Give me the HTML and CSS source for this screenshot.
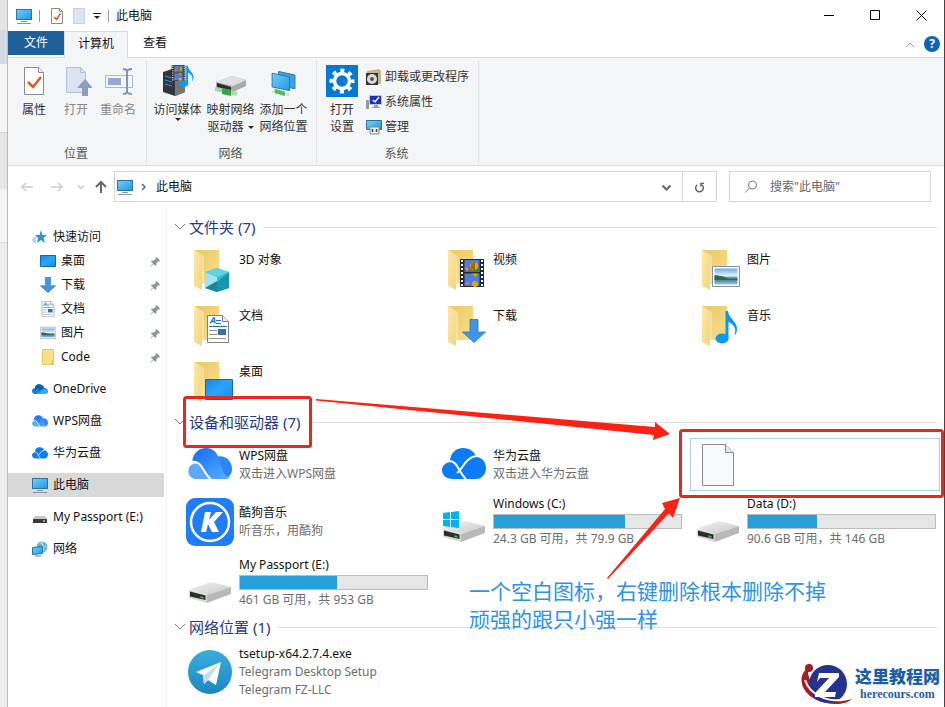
FILE: index.html
```html
<!DOCTYPE html>
<html lang="zh-CN">

<head>
    <meta charset="UTF-8">
    <meta name="viewport" content="width=device-width, initial-scale=1.0">
    <title>此电脑</title>
    <link rel="stylesheet" href="styles.css">
</head>

<body>
    <!-- shared icons -->
    <svg class="sprite" aria-hidden="true">
        <defs>
            <linearGradient id="screen" x1="0" y1="0" x2="1" y2="1">
                <stop offset="0" stop-color="#6fd0fb" />
                <stop offset="1" stop-color="#1f97e6" />
            </linearGradient>
            <linearGradient id="desk" x1="0" y1="0" x2="1" y2="1">
                <stop offset="0" stop-color="#1488e4" />
                <stop offset=".5" stop-color="#2aa6ff" />
                <stop offset="1" stop-color="#1488e8" />
            </linearGradient>
            <linearGradient id="fold-back" x1="0" y1="0" x2="1" y2="1">
                <stop offset="0" stop-color="#e9c765" />
                <stop offset="1" stop-color="#fbdf8c" />
            </linearGradient>
            <linearGradient id="fold-front" x1="0" y1="0" x2="1" y2="1">
                <stop offset="0" stop-color="#ffe9a8" />
                <stop offset="1" stop-color="#f3d57c" />
            </linearGradient>
            <linearGradient id="metal" x1="0" y1="0" x2="1" y2="1">
                <stop offset="0" stop-color="#f2f2f2" />
                <stop offset="1" stop-color="#c9c9c9" />
            </linearGradient>
            <linearGradient id="cloud" x1="0" y1="0" x2="1" y2="1">
                <stop offset="0" stop-color="#1469f0" />
                <stop offset="1" stop-color="#55b4ff" />
            </linearGradient>
            <linearGradient id="sky" x1="0" y1="0" x2="0" y2="1">
                <stop offset="0" stop-color="#6ea9ea" />
                <stop offset=".45" stop-color="#e4f2fc" />
                <stop offset=".6" stop-color="#4c8a72" />
                <stop offset=".7" stop-color="#477f9c" />
                <stop offset="1" stop-color="#9cc9e4" />
            </linearGradient>
            <linearGradient id="tele" x1="0" y1="0" x2="0" y2="1">
                <stop offset="0" stop-color="#37aee2" />
                <stop offset="1" stop-color="#1e86c0" />
            </linearGradient>
        </defs>
        <symbol id="i-pc" viewBox="0 0 16 16">
            <rect x=".5" y="1.5" width="15" height="10" fill="url(#screen)" stroke="#2d759f" />
            <path d="M5 13.500h6M1 15.500h14" stroke="#8296a3" />
        </symbol>
        <symbol id="i-check" viewBox="0 0 32 32">
            <path d="M6.500 2.500h14l5 5v22h-19z" fill="#fff" stroke="#8a8a8a" />
            <path d="M20.500 2.500v5h5" fill="#eee" stroke="#8a8a8a" />
            <path d="M10 17l5 5 8-10" fill="none" stroke="#e2571e" stroke-width="2.500" />
        </symbol>
        <symbol id="i-pin" viewBox="0 0 12 12">
            <path d="M7 1l4 4-1 1-1-.3L7 8v2L6 11 3.800 8.600 1 11.500l-.5-.5L3.300 8.100 1 6l1-1h2l2.400-2L6 2z" fill="#8796a5" />
        </symbol>
        <symbol id="i-folder" viewBox="0 0 48 48">
            <path d="M8 4h25v34H14z" fill="url(#fold-back)" />
            <path d="M8 4l8 5v35l-8-4z" fill="url(#fold-front)" />
            <path d="M16 9v35l2-4V10z" fill="#fff" opacity=".35" />
        </symbol>
        <symbol id="i-drive" viewBox="0 0 48 48">
            <path d="M3 30.500L25 23l20 5-24 8z" fill="url(#metal)" />
            <path d="M3 31l18 5v8L3 39z" fill="#d8d8d8" />
            <path d="M4 32.500l15.500 4V41L4 37.500z" fill="#2b302c" />
            <path d="M21 36l24-8v7l-24 9z" fill="#b9b9b9" />
            <path d="M14.500 37.300l3 .8v1.600l-3-.8z" fill="#3fc450" />
        </symbol>
        <symbol id="i-wps" viewBox="0 0 44 32">
            <path d="M28 9c8-3 16 3 16 12 0 6-4 10-10 10l-9-8z" fill="#2f85f6" />
            <path d="M4 14C5 5 11 0 18 0c7 0 11 4 13 11 2 7 3 16 11 19-2 1-4 1-6 1H23C18 26 14 14 4 14z" fill="url(#cloud)" />
            <path d="M1 20c3-6 10-6 14 0 3 5 4 9 7 11H9C2 31-1 25 1 20z" fill="#5aa9fa" />
            <path d="M4 13.500C15 13 15 26 23 31" fill="none" stroke="#fff" stroke-width="2" />
        </symbol>
        <symbol id="i-huawei" viewBox="0 0 44 32">
            <path d="M8 14C8 5 14 0 21 0c7 0 12 4 13 9 6 0 10 5 10 11 0 6-4 11-10 11H11C4 31 0 27 0 22c0-4 3-7 8-8z" fill="#0a7cf8" />
            <path d="M7 13c9 0 9 11 17 18M34 8C23 10 21 21 15 25" fill="none" stroke="#fff" stroke-width="2" />
        </symbol>
        <symbol id="i-down" viewBox="0 0 24 24">
            <path d="M8 .5h8V13h7.500L12 23.500.5 13H8z" fill="#3e96e4" stroke="#2874bb" stroke-width=".8" />
        </symbol>
        <symbol id="i-doc" viewBox="0 0 22 28">
            <path d="M.5.5h15l6 6v21H.5z" fill="#fff" stroke="#7d8185" />
            <path d="M15.500.5v6h6" fill="#e8eaec" stroke="#7d8185" />
            <path d="M3 8.500L6.500 3h1L8 8.500M4.500 6.500H8" fill="none" stroke="#1979ca" stroke-width="1.300" />
            <path d="M9 5.500h5M9 8.500h5M2 11.500h18" stroke="#1979ca" />
            <path d="M2 15.500h8M2 19.500h8M2 23.500h17" stroke="#9a8f9a" />
            <path d="M11 14h8v6h-8z" fill="#35729e" />
        </symbol>
        <symbol id="i-photo" viewBox="0 0 28 21">
            <path d="M.5.5h27v20H.5z" fill="#fff" stroke="#84909b" />
            <path d="M2.500 2.500h23v16h-23z" fill="url(#sky)" />
            <path d="M2.500 9l7 1 8 3h8v1H2.500z" fill="#35664a" />
        </symbol>
        <symbol id="i-note" viewBox="0 0 22 34">
            <ellipse cx="7" cy="28.500" rx="6.500" ry="5" fill="#0a99ee" />
            <path d="M10.500 29V1H13c1 8 9 10 9 18 0 3-1 5-2 6-1-1 1-3 0-6-1-4-4-6-6.500-7v17z" fill="#0a99ee" />
        </symbol>
        <symbol id="i-film" viewBox="0 0 24 28">
            <path d="M0 0h24v28H0z" fill="#292929" />
            <path d="M4.500 1h15v12h-15zM4.500 14.500h15V27h-15z" fill="#477fe0" />
            <path d="M4.500 9c5-3 8 0 15-1v5h-15z" fill="#47852f" />
            <circle cx="14" cy="7" r="4" fill="#e7a616" />
            <path d="M14 3v8M12 4v6" stroke="#7c1717" />
            <path d="M12 14.500h6l-3 4z" fill="#d5a00f" />
            <circle cx="15" cy="25" r="3" fill="#e7a616" />
            <path d="M5 9l3 1-2 2M5 25l4-1" stroke="#ef6aa6" stroke-width="2" />
            <path d="M2 1v27M22 1v27" stroke="#fff" stroke-width="2" stroke-dasharray="2 2" />
        </symbol>
        <symbol id="i-net" viewBox="-2 -4 32 35">
            <path d="M8 3l18 4v15L8 18z" fill="#3aa2e4" stroke="#27729f" />
            <path d="M1 5l19 4v15L1 20z" fill="url(#screen)" stroke="#27729f" />
            <path d="M1 23l19 4v3L1 26z" fill="#d5dbd8" />
            <path d="M4 22l11 3v5L4 27z" fill="#52bd63" />
        </symbol>
    </svg>

    <div class="backdrop"></div>
    <div class="window">
        <header class="titlebar">
            <svg class="i16"><use href="#i-pc" /></svg>
            <span class="sep"></span>
            <svg class="i16" viewBox="0 0 16 16">
                <path d="M2.500.5h8l3 3v12h-11z" fill="#fff" stroke="#8a8a8a" />
                <path d="M10.500.5v3h3" fill="none" stroke="#8a8a8a" />
                <path d="M5 9l2.500 2.500 4-6" fill="none" stroke="#e2571e" stroke-width="1.500" />
            </svg>
            <svg class="i16" viewBox="0 0 16 16"><path d="M1.500.5h11v15h-11z" fill="#dbe4f5" stroke="#c3d0e8" /></svg>
            <svg class="quick-more" viewBox="0 0 8 8"><path d="M0 1.500h8" stroke="#222" /><path d="M1 4h6L4 7z" fill="#222" /></svg>
            <span class="sep"></span>
            <span class="title">此电脑</span>
            <div class="window-buttons">
                <button aria-label="最小化"><svg viewBox="0 0 11 11"><path d="M0 5.500h10" stroke="#000" /></svg></button>
                <button aria-label="最大化"><svg viewBox="0 0 11 11"><path d="M.5.5h9v9h-9z" fill="none" stroke="#000" /></svg></button>
                <button aria-label="关闭"><svg viewBox="0 0 11 11"><path d="M.5.5l10 10M10.500.5l-10 10" stroke="#000" /></svg></button>
            </div>
        </header>

        <div class="tabs">
            <button class="tab file">文件</button>
            <button class="tab active">计算机</button>
            <button class="tab">查看</button>
            <button class="collapse" aria-label="折叠功能区"><svg viewBox="0 0 10 6"><path d="M1 5l4-4 4 4" fill="none" stroke="#999" /></svg></button>
            <button class="help" aria-label="帮助">?</button>
        </div>

        <div class="ribbon">
            <section class="group">
                <div class="group-items">
                    <button class="big"><svg class="i32"><use href="#i-check" /></svg>属性</button>
                    <button class="big" disabled>
                        <svg class="i32" viewBox="0 0 32 32">
                            <path d="M6.500 2.500h14l5 5v20h-19z" fill="#dce4f3" stroke="#b4c1da" />
                            <path d="M20.500 2.500v5h5" fill="none" stroke="#b4c1da" />
                            <path d="M25 14l8 9h-5v8h-6v-8h-5z" fill="#8e9fbe" />
                        </svg>打开</button>
                    <button class="big" disabled>
                        <svg class="i32" viewBox="0 0 32 32">
                            <path d="M3.500 10.500h27v12h-27z" fill="#f0f4fb" stroke="#a9b7d2" />
                            <path d="M6 13h13v7H6z" fill="#97a8c8" />
                            <path d="M21 4c3 0 4 1 4 3v19c0 2-1 3-4 3M30 4c-3 0-5 1-5 3v19c0 2 2 3 5 3" fill="none" stroke="#8495b3" stroke-width="2" />
                        </svg>重命名</button>
                </div>
                <h2>位置</h2>
            </section>
            <section class="group">
                <div class="group-items network">
                    <button class="big">
                        <svg class="i32" viewBox="0 0 32 32">
                            <path d="M1 7l9-3 13 3v20l-10 4L1 27z" fill="#32363a" />
                            <path d="M13 10l10-3v20l-10 4z" fill="#777" />
                            <path d="M3 11l7 2M3 15l7 2M3 19l7 2" stroke="#2896e8" />
                            <svg x="9" y="0" width="15" height="16"><use href="#i-film" /></svg>
                            <svg x="17" y="0" width="15" height="22"><use href="#i-note" /></svg>
                        </svg>访问媒体<i class="caret"></i></button>
                    <button class="big">
                        <svg class="i32" viewBox="0 0 32 32">
                            <path d="M1 17l16-6 14 4v6l-13 6-17-4z" fill="#aaa" />
                            <path d="M1 17l16-6 14 4-13 6z" fill="#e0e0e0" />
                            <path d="M2 18l14 4v3L2 22z" fill="#2c2c2c" />
                            <path d="M0 24l22 5" stroke="#a9d8ae" stroke-width="4" />
                            <path d="M7 23l9 2v6l-9-2z" fill="#36a548" />
                        </svg>映射网络<br>驱动器<i class="caret inline"></i></button>
                    <button class="big"><svg class="i32"><use href="#i-net" /></svg>添加一个<br>网络位置</button>
                </div>
                <h2>网络</h2>
            </section>
            <section class="group">
                <div class="group-items system">
                    <button class="big">
                        <svg class="i32" viewBox="0 0 32 32">
                            <path d="M0 0h32v32H0z" fill="#0478d7" />
                            <circle cx="16" cy="16" r="7.500" fill="none" stroke="#fff" stroke-width="3.500" />
                            <circle cx="16" cy="16" r="10.500" fill="none" stroke="#fff" stroke-width="4" stroke-dasharray="4 4.247" stroke-dashoffset="2" />
                        </svg>打开<br>设置</button>
                    <div class="small-list">
                        <button class="small">
                            <svg class="i16" viewBox="0 0 16 16">
                                <path d="M1 2l12-2 2 2v13H1z" fill="#c5b58e" />
                                <path d="M0 4h12v12H0z" fill="#333" />
                                <circle cx="6" cy="10" r="5" fill="#ddd" />
                                <circle cx="6" cy="10" r="2" fill="#555" />
                            </svg>卸载或更改程序</button>
                        <button class="small">
                            <svg class="i16" viewBox="0 0 16 16">
                                <path d="M0 6h3v9H0z" fill="#999" />
                                <path d="M3.500 1.500h12v9h-12z" fill="#1c2ecb" stroke="#c5c5cd" />
                                <path d="M7 6l2 2 4-5" fill="none" stroke="#fff" stroke-width="1.500" />
                                <path d="M8 11h4v2h2v1H6v-1h2z" fill="#999" />
                            </svg>系统属性</button>
                        <button class="small">
                            <svg class="i16" viewBox="0 0 16 16">
                                <path d="M.5 1.500h15v9H.5z" fill="url(#screen)" stroke="#27729f" />
                                <path d="M4 8h9v7H4z" fill="#eee" stroke="#888" />
                                <path d="M6.500 10v3M10.500 10v3" stroke="#444" stroke-width="1.500" />
                            </svg>管理</button>
                    </div>
                </div>
                <h2>系统</h2>
            </section>
        </div>

        <div class="address-row">
            <button class="nav-btn" aria-label="后退" disabled><svg viewBox="0 0 14 14"><path d="M13 7H2M6 3L2 7l4 4" fill="none" stroke="#ccc" stroke-width="1.500" /></svg></button>
            <button class="nav-btn" aria-label="前进" disabled><svg viewBox="0 0 14 14"><path d="M1 7h11M8 3l4 4-4 4" fill="none" stroke="#ccc" stroke-width="1.500" /></svg></button>
            <button class="nav-btn recent" aria-label="最近"><svg viewBox="0 0 14 14"><path d="M4 5.500l3 3 3-3" fill="none" stroke="#ccc" stroke-width="1.500" /></svg></button>
            <button class="nav-btn up" aria-label="向上"><svg viewBox="0 0 14 14"><path d="M7 13V2M2 7l5-5 5 5" fill="none" stroke="#666" stroke-width="2" /></svg></button>
            <div class="address">
                <svg class="i16"><use href="#i-pc" /></svg>
                <svg class="crumb" viewBox="0 0 6 8"><path d="M1 1l3 3-3 3" fill="none" stroke="#666" stroke-width="1.500" /></svg>
                <span>此电脑</span>
                <button class="drop" aria-label="历史记录"><svg viewBox="0 0 11 11"><path d="M1.500 3.500l4 4 4-4" fill="none" stroke="#666" stroke-width="2" /></svg></button>
                <button class="refresh" aria-label="刷新"><svg viewBox="0 0 12 12"><path d="M3.500 3a4.200 4.200 0 1 0 5 0M1 1.500h3.500V5" fill="none" stroke="#666" stroke-width="1.600" /></svg></button>
            </div>
            <label class="search">
                <svg viewBox="0 0 14 14"><circle cx="8.500" cy="5" r="4" fill="none" stroke="#777" /><path d="M5.500 8L1 12.500" stroke="#777" /></svg>
                <input type="search" aria-label="搜索" placeholder='搜索"此电脑"'>
            </label>
        </div>

        <div class="body">
            <nav class="sidebar">
                <a href="#"><svg class="i16" viewBox="0 0 16 16"><path d="M9 1l1.500 5H15l-3.500 3 1.500 5-4-3-4 3 1-5-3-3h4.500z" fill="#2b94e2" /><path d="M1 9h3M0 11h4M1 13h3" stroke="#67b7ef" /></svg>快速访问</a>
                <a class="sub" href="#"><svg class="i16" viewBox="0 0 16 16"><path d="M.5 2.500h15v11H.5z" fill="url(#desk)" stroke="#1568af" /></svg>桌面<svg class="pin"><use href="#i-pin" /></svg></a>
                <a class="sub" href="#"><svg class="i16"><use href="#i-down" /></svg>下载<svg class="pin"><use href="#i-pin" /></svg></a>
                <a class="sub" href="#"><svg class="i16"><use href="#i-doc" /></svg>文档<svg class="pin"><use href="#i-pin" /></svg></a>
                <a class="sub" href="#"><svg class="i16"><use href="#i-photo" /></svg>图片<svg class="pin"><use href="#i-pin" /></svg></a>
                <a class="sub" href="#"><svg class="i16" viewBox="0 0 16 16"><path d="M2.500.5h11v15h-11z" fill="#fbe08c" stroke="#e6c560" /><path d="M12 11h2v4h-3z" fill="#e8c75e" /></svg>Code<svg class="pin"><use href="#i-pin" /></svg></a>
                <a class="root" href="#"><svg class="i16" viewBox="0 0 16 16"><path d="M3 7c0-5 8-5 9 0 5 0 5 6 1 6H3c-4 0-4-6 0-6z" fill="#137bd0" /><path d="M4 13l8-5c4 0 5 5 1 5z" fill="#31b0f0" /><path d="M3 7c0-5 7-5 9 0L8 9z" fill="#0963b1" /></svg>OneDrive</a>
                <a class="root" href="#"><svg class="i16"><use href="#i-wps" /></svg>WPS网盘</a>
                <a class="root" href="#"><svg class="i16"><use href="#i-huawei" /></svg>华为云盘</a>
                <a class="root selected" href="#"><svg class="i16"><use href="#i-pc" /></svg>此电脑</a>
                <a class="root" href="#"><svg class="i16" viewBox="0 0 16 16"><path d="M3 7h10l2 3H1z" fill="#c8c8c8" /><path d="M1 10h14v4H1z" fill="#3b3b3b" /><path d="M11 12h2" stroke="#eee" /></svg>My Passport (E:)</a>
                <a class="root" href="#"><svg class="i16" viewBox="0 0 16 16"><circle cx="10" cy="6" r="5.500" fill="#66b4d4" /><path d="M8 2c4 1 3 4 7 4M10 1l2 9" stroke="#b8e3e6" fill="none" /><path d="M.5 6.500l10-1v7l-10 1z" fill="url(#screen)" stroke="#27729f" /><path d="M3 15h6" stroke="#688" /></svg>网络</a>
            </nav>

            <main class="content">
                <h3 class="section-title"><svg viewBox="0 0 12 8"><path d="M1 1l5 5 5-5" fill="none" stroke="#777" /></svg>文件夹 (7)</h3>
                <div class="grid folders">
                    <a class="tile" href="#">
                        <svg class="i48" viewBox="0 0 48 48"><use href="#i-folder" /><path d="M19 26l12-4 12 4v16l-12 4-12-4z" fill="#38bcd4" /><path d="M19 26l12 5v15l-12-4z" fill="#9fe5ee" /><path d="M19 26l12-4 12 4-12 5z" fill="#5fd5e4" /><path d="M31 36l12-10v16l-12 4z" fill="#1596b4" /><path d="M19 42l12-7v11z" fill="#1a8799" /></svg>
                        <div class="info"><b>3D 对象</b></div>
                    </a>
                    <a class="tile" href="#">
                        <svg class="i48" viewBox="0 0 48 48"><use href="#i-folder" /><svg x="20" y="13" width="24" height="28"><use href="#i-film" /></svg></svg>
                        <div class="info"><b>视频</b></div>
                    </a>
                    <a class="tile" href="#">
                        <svg class="i48" viewBox="0 0 48 48"><use href="#i-folder" /><svg x="18" y="20" width="28" height="21"><use href="#i-photo" /></svg></svg>
                        <div class="info"><b>图片</b></div>
                    </a>
                    <a class="tile" href="#">
                        <svg class="i48" viewBox="0 0 48 48"><use href="#i-folder" /><svg x="21" y="13" width="22" height="28"><use href="#i-doc" /></svg></svg>
                        <div class="info"><b>文档</b></div>
                    </a>
                    <a class="tile" href="#">
                        <svg class="i48" viewBox="0 0 48 48"><use href="#i-folder" /><svg x="22" y="17" width="24" height="24"><use href="#i-down" /></svg></svg>
                        <div class="info"><b>下载</b></div>
                    </a>
                    <a class="tile" href="#">
                        <svg class="i48" viewBox="0 0 48 48"><use href="#i-folder" /><svg x="21" y="8" width="22" height="34"><use href="#i-note" /></svg></svg>
                        <div class="info"><b>音乐</b></div>
                    </a>
                    <a class="tile" href="#">
                        <svg class="i48" viewBox="0 0 48 48"><use href="#i-folder" /><path d="M19.500 21.500h27v20h-27z" fill="url(#desk)" stroke="#1568af" /></svg>
                        <div class="info"><b>桌面</b></div>
                    </a>
                </div>

                <h3 class="section-title"><svg viewBox="0 0 12 8"><path d="M1 1l5 5 5-5" fill="none" stroke="#777" /></svg>设备和驱动器 (7)</h3>
                <div class="grid devices">
                    <a class="tile" href="#">
                        <svg class="i48" viewBox="0 0 48 48"><svg x="2" y="7" width="44" height="32"><use href="#i-wps" /></svg></svg>
                        <div class="info"><b>WPS网盘</b><small>双击进入WPS网盘</small></div>
                    </a>
                    <a class="tile" href="#">
                        <svg class="i48" viewBox="0 0 48 48"><svg x="2" y="7" width="44" height="32"><use href="#i-huawei" /></svg></svg>
                        <div class="info"><b>华为云盘</b><small>双击进入华为云盘</small></div>
                    </a>
                    <a class="tile hovered" href="#" aria-label="空白图标">
                        <svg class="i48" viewBox="0 0 48 48"><path d="M8.500 3.500h23l8 8v33h-31z" fill="#f8f9fa" stroke="#8b8b8b" /><path d="M31.500 3.500v8h8" fill="#e5e7e9" stroke="#8b8b8b" /></svg>
                    </a>
                    <a class="tile" href="#">
                        <svg class="i48" viewBox="0 0 48 48"><rect width="48" height="48" rx="9" fill="#1f7cfb" /><circle cx="24" cy="24" r="19" fill="none" stroke="#fff" stroke-width="2.500" /><path d="M19 14h6l-2 8 7-8h7l-9 10 5 10h-7l-4-8-2 8h-5z" fill="#fff" /></svg>
                        <div class="info"><b>酷狗音乐</b><small>听音乐，用酷狗</small></div>
                    </a>
                    <a class="tile" href="#">
                        <svg class="i48" viewBox="0 0 48 48"><use href="#i-drive" /><path d="M3 15l7-1v7H3zM11 14l8-1v8h-8zM3 22h7v7l-7-1zM11 22h8v8l-8-1z" fill="#00b5ed" /></svg>
                        <div class="info"><b>Windows (C:)</b><div class="bar"><div class="used" style="width: 70%"></div></div><small>24.3 GB 可用，共 79.9 GB</small></div>
                    </a>
                    <a class="tile" href="#">
                        <svg class="i48"><use href="#i-drive" /></svg>
                        <div class="info"><b>Data (D:)</b><div class="bar"><div class="used" style="width: 37%"></div></div><small>90.6 GB 可用，共 146 GB</small></div>
                    </a>
                    <a class="tile" href="#">
                        <svg class="i48"><use href="#i-drive" /></svg>
                        <div class="info"><b>My Passport (E:)</b><div class="bar"><div class="used" style="width: 52%"></div></div><small>461 GB 可用，共 953 GB</small></div>
                    </a>
                </div>

                <h3 class="section-title"><svg viewBox="0 0 12 8"><path d="M1 1l5 5 5-5" fill="none" stroke="#777" /></svg>网络位置 (1)</h3>
                <div class="grid programs">
                    <a class="tile" href="#">
                        <svg class="i48" viewBox="0 0 48 48"><circle cx="24" cy="24" r="22" fill="url(#tele)" /><path d="M10 24l25-10-5 23-8-5-4 4-1-9z" fill="#fff" /><path d="M17 28l17-13-12 17-4 4z" fill="#c6dceb" /></svg>
                        <div class="info"><b>tsetup-x64.2.7.4.exe</b><small>Telegram Desktop Setup</small><small>Telegram FZ-LLC</small></div>
                    </a>
                </div>
            </main>
        </div>
    </div>

    <!-- notes drawn over the window -->
    <svg class="marks" viewBox="0 0 945 707" aria-hidden="true">
        <g fill="none" stroke="#e8271e" stroke-width="3">
            <rect x="184.500" y="397.500" width="126" height="49" rx="2" />
            <rect x="680.500" y="430.500" width="262" height="66" rx="2" />
        </g>
        <path d="M316 400.500v-1.500l339 28v-5l15 12-17 6 1-5z" fill="#fb2113" />
        <path d="M607 578l58-69-3-6 18-5-7 20-4-5-61 66z" fill="#fb2113" />
    </svg>
    <p class="note">一个空白图标，右键删除根本删除不掉<br>顽强的跟只小强一样</p>
    <div class="watermark">
        <svg viewBox="0 0 58 42">
            <path d="M12 4C-4 14 6 40 38 41c8 0 14-2 17-5-12 4-24 1-32-7C14 21 9 13 12 4z" fill="#a51d22" />
            <circle cx="12" cy="5" r="4" fill="#a51d22" />
            <circle cx="31" cy="21" r="19" fill="#24338f" />
            <path d="M22 10h20v4L28 29h11l-1 5H18v-4l14-15h-9l-3 4z" fill="#fff" />
            <path d="M8 17c5 15 22 22 38 20" fill="none" stroke="#fff" stroke-width="2" />
        </svg>
        <div><strong>这里教程网</strong><em>herecours.com</em></div>
    </div>
</body>

</html>
```
FILE: styles.css
```css
* {
    margin: 0;
    padding: 0;
    box-sizing: border-box;
}

body {
    font-family: 'Noto Sans', 'Noto Sans CJK SC', sans-serif;
    font-size: 12px;
    line-height: 18px;
    color: #111;
    min-height: 100vh;
    display: flex;
    position: relative;
    overflow: hidden;
}

button {
    font: inherit;
    color: inherit;
    background: none;
    border: none;
}

a {
    color: inherit;
    text-decoration: none;
}

svg {
    flex: none;
}

.sprite {
    position: absolute;
    width: 0;
    height: 0;
}

.i16 {
    width: 16px;
    height: 16px;
}

.i32 {
    width: 32px;
    height: 32px;
}

.i48 {
    width: 48px;
    height: 48px;
}

.backdrop {
    width: 8px;
    border-right: 1px solid #bbb;
    background: linear-gradient(#e4e4e4 30px, #d5dae2 30px, #d5dae2 64px, #f4f4f4 64px, #f4f4f4 132px, #ccc 132px, #e6e6e6 133px, #e6e6e6 189px, #f5f5f5 189px, #f5f5f5 242px, #ccc 242px, #ececec 243px);
}

.window {
    flex: 1;
    min-width: 0;
    background: #fff;
    border-right: 1px solid #444;
    display: flex;
    flex-direction: column;
}

/* title bar */
.titlebar {
    display: flex;
    align-items: center;
    height: 31px;
    padding-left: 8px;
    gap: 7px;
}

.sep {
    width: 1px;
    height: 12px;
    background: #999;
}

.quick-more {
    width: 8px;
    height: 8px;
    margin-left: -2px;
}

.titlebar .i16 + .sep {
    margin-right: 2px;
}

.window-buttons {
    display: flex;
    margin-left: auto;
}

.window-buttons button {
    width: 46px;
    height: 31px;
    display: flex;
    align-items: center;
    justify-content: center;
}

.window-buttons svg {
    width: 11px;
    height: 11px;
}

/* tabs */
.tabs {
    display: flex;
    height: 27px;
    border-bottom: 1px solid #d9dadb;
}

.tab {
    height: 24px;
    padding: 0 15px;
}

.tab.file {
    width: 56px;
    background: #1f6099;
    color: #fff;
}

.tab.active {
    width: 64px;
    height: 27px;
    padding: 0 0 3px;
    background: #f4f5f7;
    border: 1px solid #d9dadb;
    border-bottom: none;
}

.collapse {
    width: 10px;
    margin-left: auto;
    margin-right: 9px;
}

.collapse svg {
    width: 10px;
    height: 6px;
}

.help {
    width: 16px;
    height: 16px;
    margin: 5px 4px 0 0;
    border-radius: 50%;
    background: #0c66b8;
    color: #fff;
    font-weight: 700;
    line-height: 16px;
}

/* ribbon */
.ribbon {
    display: flex;
    height: 108px;
    background: #f4f5f7;
    border-bottom: 1px solid #d9dadb;
    color: #333;
}

.group {
    display: flex;
    flex-direction: column;
    justify-content: space-between;
    margin: 3px 0 2px;
    padding: 4px 7px 0 5px;
    border-right: 1px solid #e0e1e3;
}

.group h2 {
    font-size: 12px;
    font-weight: 400;
    text-align: center;
    color: #555;
}

.group-items {
    display: flex;
    align-items: flex-start;
}

.big {
    width: 42px;
    white-space: nowrap;
    line-height: 17px;
}

.big .i32 {
    display: block;
    margin: 0 auto 4px;
}

.big:disabled {
    color: #888;
}

.network {
    margin: 0 -1px;
}

.network .big {
    width: 53px;
    position: relative;
}

.caret {
    position: absolute;
    left: 24px;
    top: 53px;
    border: 3px solid transparent;
    border-top-color: #222;
    border-bottom: none;
}

.caret.inline {
    position: static;
    display: inline-block;
    vertical-align: middle;
    margin-left: 4px;
}

.system {
    gap: 8px;
}

.system .big {
    width: 32px;
    margin-left: 4px;
}

.small-list {
    margin-top: -1px;
    padding-right: 2px;
}

.small {
    display: flex;
    align-items: center;
    gap: 3px;
    height: 25px;
    white-space: nowrap;
}

/* address row */
.address-row {
    display: flex;
    align-items: center;
    height: 41px;
    padding: 0 13px 0 12px;
}

.nav-btn {
    width: 14px;
    height: 14px;
    margin-right: 16px;
}

.nav-btn svg {
    display: block;
    width: 14px;
    height: 14px;
}

.nav-btn.recent {
    margin: 0 6px 0 -6px;
}

.nav-btn.up {
    margin-right: 6px;
}

.address {
    flex: 1;
    display: flex;
    align-items: center;
    height: 31px;
    border: 1px solid #d5d5d5;
    padding-left: 2px;
}

.crumb {
    width: 6px;
    height: 8px;
    margin: 0 9px 0 8px;
}

.drop {
    width: 32px;
    margin-left: auto;
}

.refresh {
    width: 34px;
    height: 29px;
    border-left: 1px solid #d5d5d5;
}

.drop svg,
.refresh svg {
    width: 11px;
    height: 11px;
    vertical-align: middle;
}

/* the arrow turns clockwise */
.refresh svg {
    transform: scaleX(-1);
}

.search {
    display: flex;
    align-items: center;
    width: 202px;
    height: 31px;
    margin-left: 12px;
    padding: 0 14px;
    gap: 12px;
    border: 1px solid #d5d5d5;
}

.search svg {
    width: 14px;
    height: 14px;
}

.search input {
    flex: 1;
    min-width: 0;
    border: none;
    outline: none;
    font: inherit;
}

.search input::placeholder {
    color: #666;
}

/* body */
.body {
    flex: 1;
    display: flex;
}

.sidebar {
    width: 159px;
    padding: 18px 2px 0 0;
    border-right: 1px solid #f3f3f3;
}

.sidebar a {
    display: flex;
    align-items: center;
    height: 24px;
    padding-left: 24px;
    gap: 5px;
}

.sidebar .sub {
    padding-left: 32px;
}

.sidebar .root {
    margin-top: 8px;
}

.sidebar .selected {
    background: #d9d9d9;
}

.pin {
    width: 11px;
    height: 11px;
    margin: 0 3px 0 auto;
}

.content {
    flex: 1;
    padding: 8px 0 0 15px;
}

.section-title {
    display: flex;
    align-items: center;
    height: 24px;
    margin: 0 7px 0 -8px;
    font-size: 15px;
    font-weight: 400;
    color: #243a86;
}

.section-title svg {
    width: 12px;
    height: 8px;
    margin-right: 3px;
}

.section-title::after {
    content: '';
    flex: 1;
    height: 1px;
    margin-left: 8px;
    background: #dedede;
}

.grid {
    display: grid;
    grid-template-columns: repeat(3, 1fr);
    padding: 3px 0 0;
}

.folders {
    grid-auto-rows: 56px;
}

.devices {
    grid-template-rows: 53px;
    grid-auto-rows: 61px;
    padding: 4px 0 2px;
}

.programs {
    grid-auto-rows: 59px;
}

.tile {
    display: flex;
    align-items: center;
    gap: 5px;
    padding: 0 8px 0 4px;
}

.folders .info {
    align-self: flex-start;
    padding-top: 9px;
}

.tile.hovered {
    border: 1px solid #a9cfea;
    padding-left: 3px;
    margin-right: 4px;
}

.info {
    flex: 1;
    min-width: 0;
    white-space: nowrap;
}

.info b,
.info small {
    display: block;
    font-size: 12px;
    font-weight: 400;
}

.info small {
    color: #6d6d6d;
}

.bar {
    height: 15px;
    margin: 1px 0;
    border: 1px solid #bcbcbc;
    background: #e6e6e6;
}

.used {
    height: 100%;
    background: #26a0da;
}

/* overlays */
.marks {
    position: absolute;
    left: 0;
    top: 0;
    width: 945px;
    height: 707px;
    pointer-events: none;
}

.note {
    position: absolute;
    left: 469px;
    top: 577px;
    font-size: 21px;
    line-height: 28px;
    color: #2d92ea;
}

.watermark {
    position: absolute;
    right: 5px;
    bottom: 2px;
    display: flex;
    align-items: center;
}

.watermark svg {
    width: 58px;
    height: 42px;
}

.watermark strong,
.watermark em {
    display: block;
    color: #1d5fa6;
    font-style: normal;
}

.watermark strong {
    font-size: 17px;
    font-weight: 900;
    line-height: 20px;
}

.watermark em {
    font-family: 'Liberation Serif', serif;
    font-size: 12px;
    font-weight: 700;
    line-height: 14px;
    text-align: center;
}
```
